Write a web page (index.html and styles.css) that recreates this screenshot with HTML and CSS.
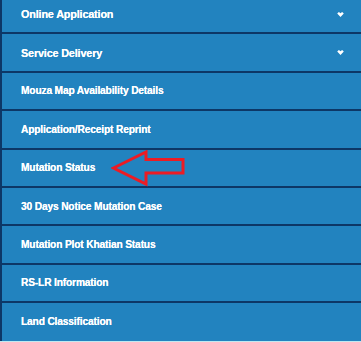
FILE: index.html
```html
<!DOCTYPE html>
<html lang="en">
<head>
    <meta charset="UTF-8">
    <meta name="viewport" content="width=device-width, initial-scale=1.0">
    <title>Menu</title>
    <link rel="stylesheet" href="styles.css">
</head>
<body>

    <ul class="menu">
        <li class="item big">
            <span>Online Application</span>
            <svg class="chev" width="7" height="5" viewBox="0 0 7 5"><path d="M0.2 1.4 L1.9 0 L3.5 1.3 L5.1 0 L6.8 1.4 L3.5 4.9 Z" fill="#fff"/></svg>
        </li>
        <li class="item big">
            <span>Service Delivery</span>
            <svg class="chev" width="7" height="5" viewBox="0 0 7 5"><path d="M0.2 1.4 L1.9 0 L3.5 1.3 L5.1 0 L6.8 1.4 L3.5 4.9 Z" fill="#fff"/></svg>
        </li>
        <li class="item"><span>Mouza Map Availability Details</span></li>
        <li class="item"><span>Application/Receipt Reprint</span></li>
        <li class="item mark">
            <span>Mutation Status</span>
            <!-- red pointer drawn over the menu -->
            <svg class="arrow" width="80" height="40" viewBox="0 0 80 40">
                <polygon points="2.5,18 35,2 35,9.5 72,9.5 72,23 35,23 35,34" fill="none" stroke="#ec1c24" stroke-width="3" stroke-linejoin="miter"/>
            </svg>
        </li>
        <li class="item"><span>30 Days Notice Mutation Case</span></li>
        <li class="item"><span>Mutation Plot Khatian Status</span></li>
        <li class="item"><span>RS-LR Information</span></li>
        <li class="item last"><span>Land Classification</span></li>
    </ul>

</body>
</html>
```

FILE: styles.css
```css
body {
    margin: 0;
    padding: 0;
    background-color: #bfe9f1;
    font-family: "Liberation Sans", Arial, sans-serif;
    overflow: hidden;
}
.menu {
    list-style: none;
    margin: -4px 0 0 0;
    padding: 0;
    border-left: 2px solid #0d3766;
    background-color: #2283bf;
}
.item {
    position: relative;
    display: flex;
    align-items: center;
    justify-content: space-between;
    height: 36.4px;
    padding: 0 17px 0 19px;
    border-bottom: 2px solid #0d3766;
    color: white;
    font-weight: bold;
    font-size: 10.2px;
    letter-spacing: -0.15px;
    text-shadow: 0 0 0.6px #fff;
}
.item.big {
    font-size: 10.8px;
}
.item.last {
    height: 37.6px;
    border-bottom: none;
}
.chev {
    display: block;
}
.arrow {
    position: absolute;
    left: 109px;
    top: 0;
}
```
